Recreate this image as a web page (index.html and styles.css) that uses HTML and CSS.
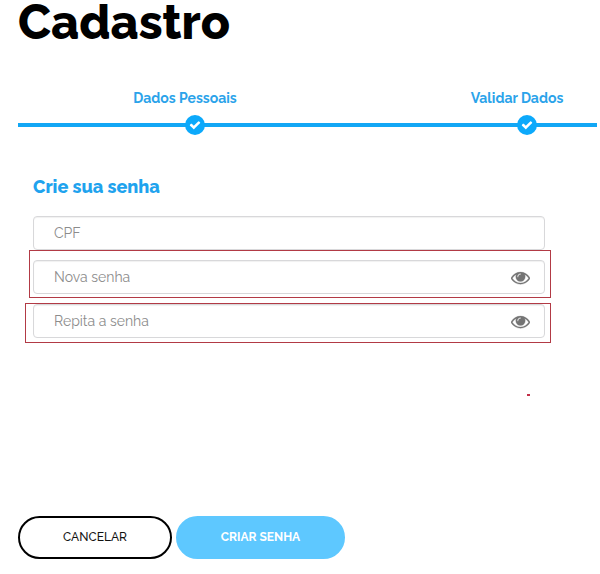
FILE: index.html
```html
<!DOCTYPE html>
<html lang="pt-BR">
<head>
<meta charset="utf-8">
<title>Cadastro</title>
<link rel="stylesheet" href="styles.css">
</head>
<body>
<svg class="symbols" width="0" height="0" aria-hidden="true">
  <symbol id="eye" viewBox="0 0 1792 1792"><path d="M1664 960q-152-236-381-353 61 104 61 225 0 185-131.5 316.5t-316.5 131.5-316.5-131.5-131.5-316.5q0-121 61-225-229 117-381 353 133 205 333.5 326.5t434.5 121.5 434.5-121.5 333.5-326.5zm-720-384q0-20-14-34t-34-14q-125 0-214.5 89.5t-89.5 214.5q0 20 14 34t34 14 34-14 14-34q0-86 61-147t147-61q20 0 34-14t14-34zm848 384q0 34-20 69-140 230-376.5 368.5t-499.5 138.5-499.5-139-376.5-368q-20-35-20-69t20-69q140-229 376.5-368t499.5-139 499.5 139 376.5 368q20 35 20 69z"/></symbol>
  <symbol id="check" viewBox="0 0 1792 1792"><path d="M1671 566q0 40-28 68l-724 724-136 136q-28 28-68 28t-68-28l-136-136-362-362q-28-28-28-68t28-68l136-136q28-28 68-28t68 28l294 295 656-657q28-28 68-28t68 28l136 136q28 28 28 68z"/></symbol>
</svg>
<main class="page">
  <h1 class="title">Cadastro</h1>
  <ol class="steps">
    <li class="step"><span class="step-label">Dados Pessoais</span><span class="dot"><svg><use href="#check"/></svg></span></li>
    <li class="step"><span class="step-label">Validar Dados</span><span class="dot"><svg><use href="#check"/></svg></span></li>
  </ol>
  <form class="form">
    <h2 class="subtitle">Crie sua senha</h2>
    <div class="field"><span>CPF</span></div>
    <div class="field"><span>Nova senha</span><svg class="eye"><use href="#eye"/></svg><i class="frame frame-new"></i></div>
    <div class="field"><span>Repita a senha</span><svg class="eye"><use href="#eye"/></svg><i class="frame frame-repeat"></i></div>
  </form>
  <div class="actions">
    <button class="button cancel" type="button">CANCELAR</button>
    <button class="button create" type="button">CRIAR SENHA</button>
  </div>
  <i class="mark"></i>
</main>
</body>
</html>
```
FILE: styles.css
```css
* { box-sizing: border-box; }
body {
  margin: 0;
  background: #fff;
  font-family: Raleway, Lato, sans-serif;
}
svg { display: block; fill: currentColor; }
.symbols { position: absolute; }
.page { position: relative; height: 574px; padding-left: 18px; }
.title {
  margin: 0;
  height: 88px;
  font-size: 48px;
  line-height: 44px;
  font-weight: 780;
  color: #000;
}
.steps {
  display: flex;
  justify-content: space-between;
  width: 579px;
  height: 88px;
  margin: 0;
  padding: 0 15px 0 111px;
  list-style: none;
  background: linear-gradient(#12a7f5, #12a7f5) 0 35px / 100% 4px no-repeat;
}
.step { display: flex; flex-direction: column; align-items: center; width: 132px; }
.step:last-child { width: 110px; }
.step-label {
  height: 27px;
  margin-right: 20px;
  font-size: 14px;
  line-height: 20px;
  font-weight: 700;
  white-space: nowrap;
  color: #2ba3ea;
}
.dot {
  display: grid;
  place-items: center;
  width: 20px;
  height: 20px;
  border-radius: 50%;
  background: #0ca9fb;
  color: #fff;
}
.dot svg { width: 12px; height: 12px; }
.form { width: 512px; margin-left: 15px; height: 340px; }
.subtitle {
  margin: 0;
  height: 40px;
  font-size: 18px;
  line-height: 22px;
  font-weight: 800;
  color: #1fa3ee;
}
.field {
  position: relative;
  display: flex;
  align-items: center;
  justify-content: space-between;
  height: 34px;
  margin-bottom: 10px;
  padding: 0 14px 0 20px;
  border: 1px solid #d8d8da;
  border-radius: 4px;
  box-shadow: inset 0 1px 1px rgba(0, 0, 0, .06);
  font-size: 14px;
  color: #8c8c8c;
}
.eye { width: 19px; height: 19px; color: #747474; stroke: currentColor; stroke-width: 24; }
.frame { position: absolute; border: 1px solid #b23a45; }
.frame-new { left: -5px; top: -11px; width: 522px; height: 48px; }
.frame-repeat { left: -9px; top: -2px; width: 526px; height: 40px; }
.actions { display: flex; gap: 4px; }
.button {
  height: 43px;
  padding: 0 0 1px;
  border: 2px solid #000;
  border-radius: 22px;
  background: #fff;
  font: 500 12px/16px Raleway, Lato, sans-serif;
  color: #111;
}
.cancel { width: 154px; }
.create { width: 169px; border-color: #5ec8ff; background: #5ec8ff; color: #fff; font-weight: 700; }
.mark { position: absolute; left: 527px; top: 394px; width: 3px; height: 2px; background: #c22f48; }
```
